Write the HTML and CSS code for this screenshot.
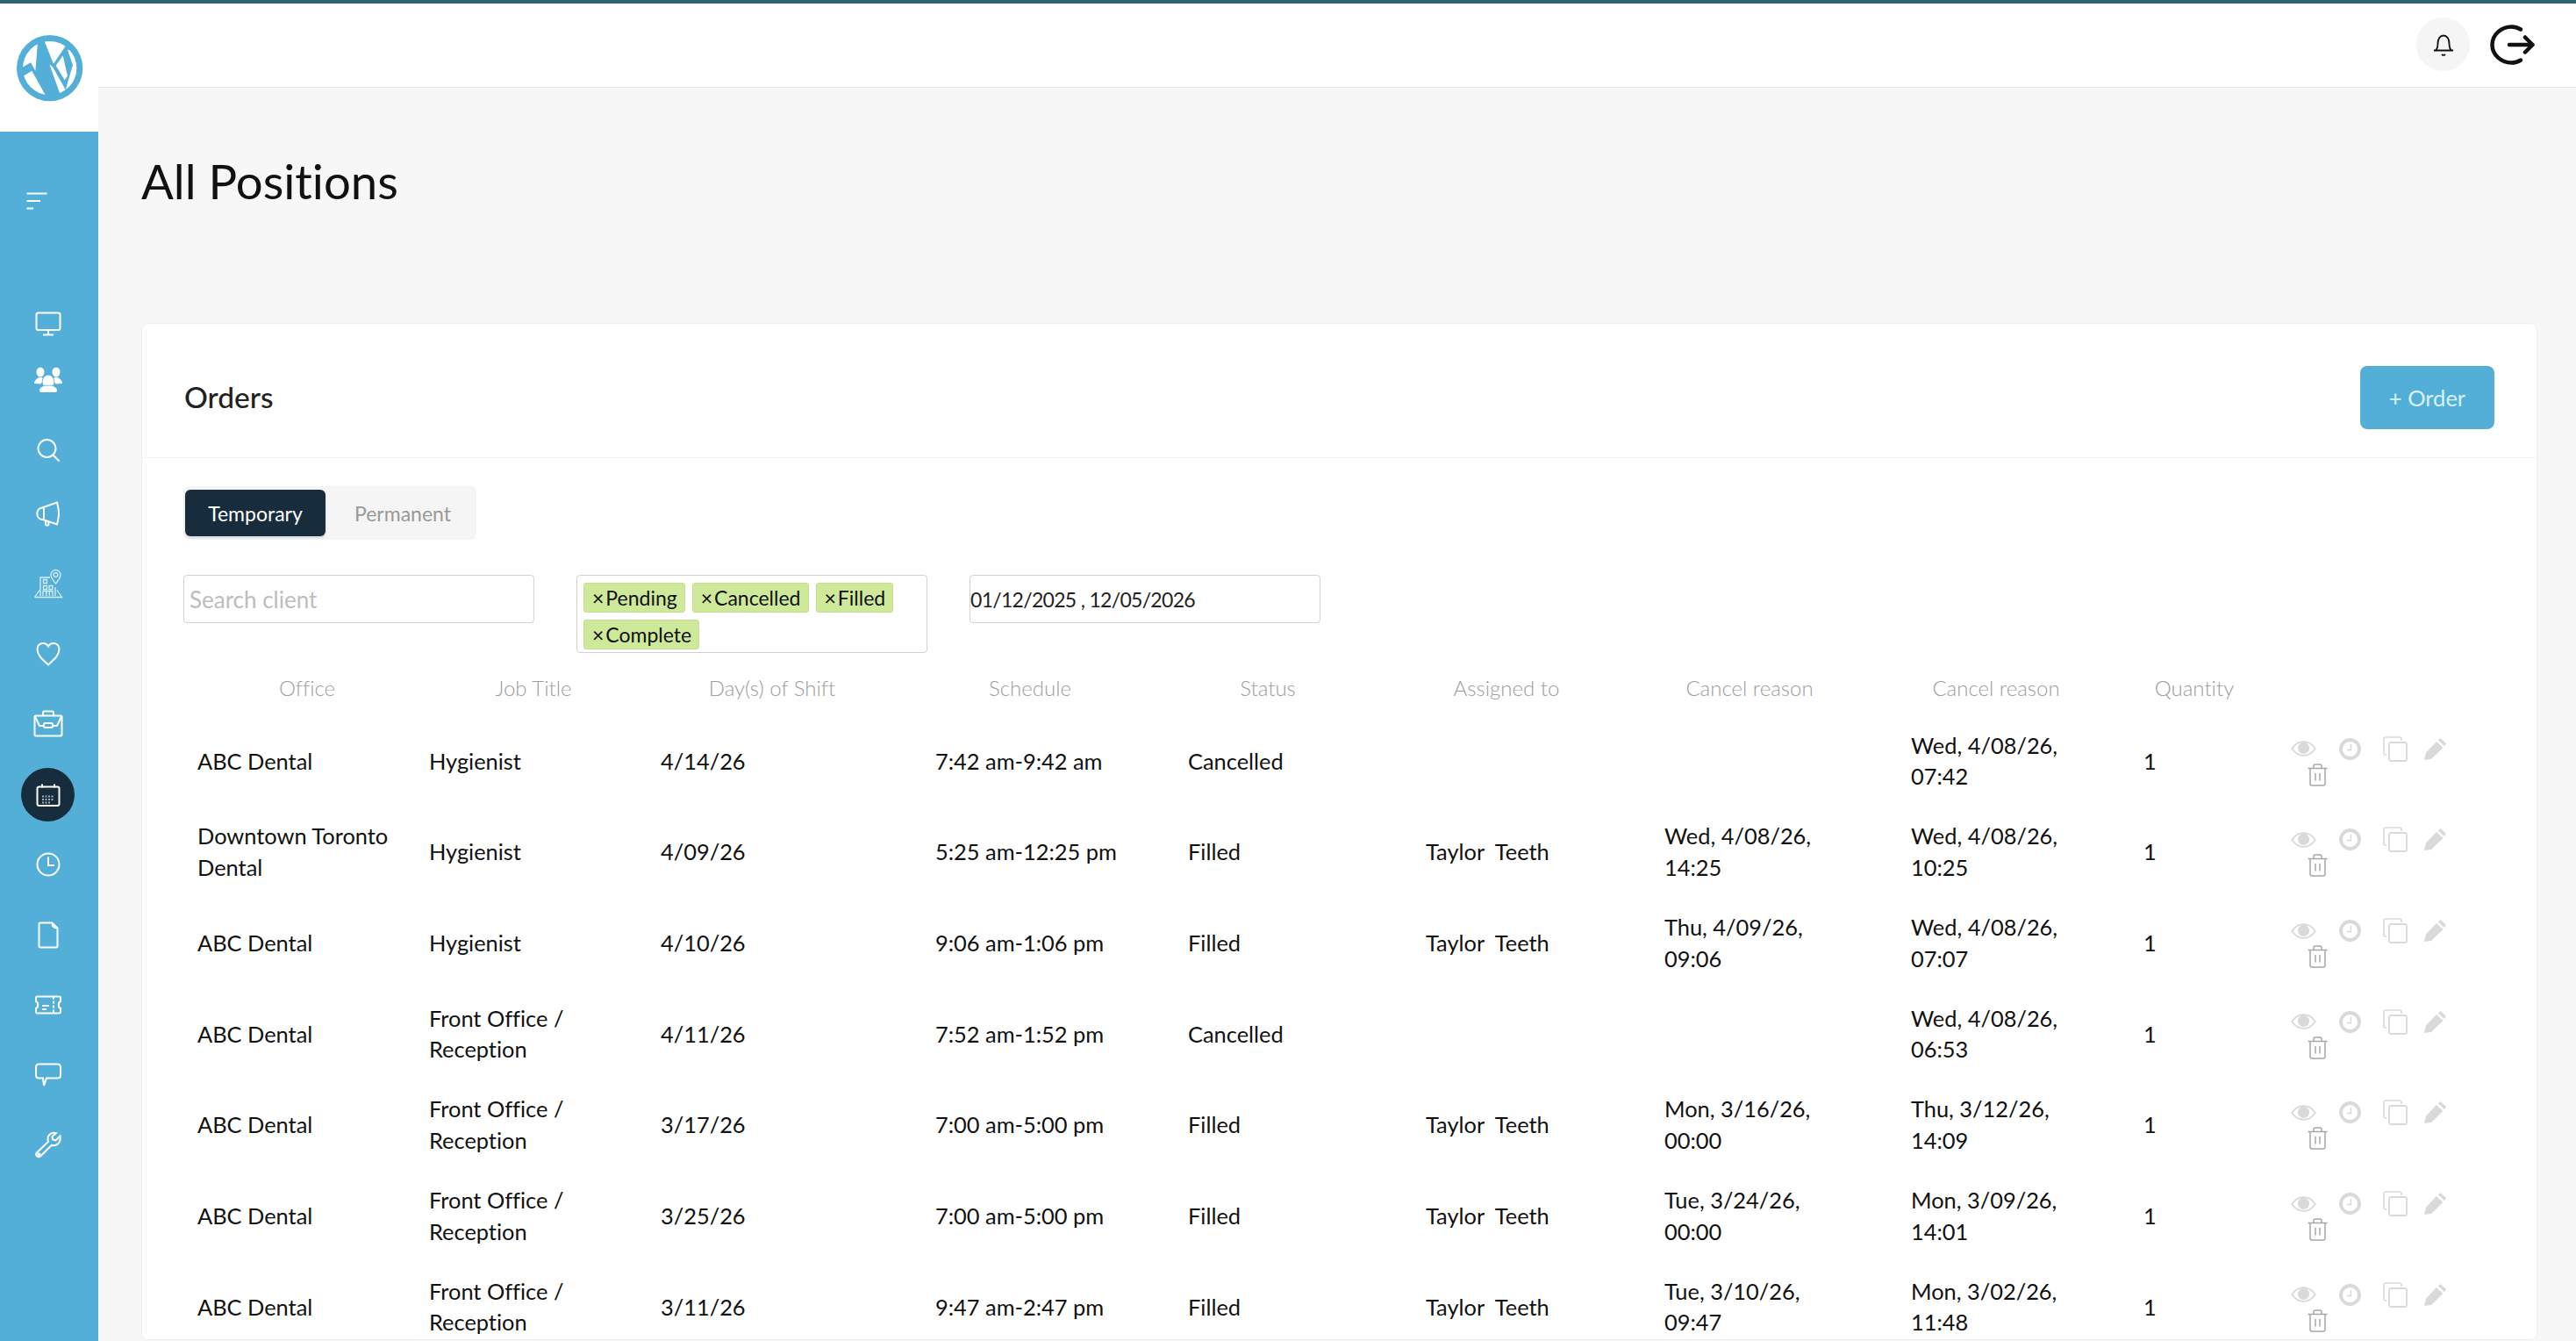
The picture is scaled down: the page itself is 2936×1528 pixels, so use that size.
FILE: index.html
```html
<!DOCTYPE html>
<html lang="en">
<head>
  <meta charset="utf-8" />
  <title>All Positions</title>
  <link rel="stylesheet" href="styles.css">
</head>
<body>
  <svg class="sprites" width="0" height="0">
    <symbol id="i-eye" viewBox="0 0 29 18">
      <path d="M1.2 9C5 3.6 9.5 1.2 14.5 1.2S24 3.6 27.8 9C24 14.4 19.500 16.800 14.500 16.800S5 14.400 1.200 9Z" fill="none" stroke="currentColor" stroke-width="1.800"/>
      <circle cx="14.500" cy="8.300" r="6.600" fill="currentColor"/>
    </symbol>
    <symbol id="i-clock" viewBox="0 0 25 25">
      <circle cx="12.500" cy="12.500" r="10.500" fill="none" stroke="currentColor" stroke-width="3.800"/>
      <path d="M13.500 7v6.500H9" fill="none" stroke="currentColor" stroke-width="1.500"/>
    </symbol>
    <symbol id="i-copy" viewBox="0 0 28 29">
      <path d="M4 21H3a2 2 0 0 1-2-2V3a2 2 0 0 1 2-2h16a2 2 0 0 1 2 2v2" fill="none" stroke="currentColor" stroke-width="1.600"/>
      <rect x="7" y="7" width="20" height="21" rx="2" fill="none" stroke="currentColor" stroke-width="1.800"/>
    </symbol>
    <symbol id="i-pencil" viewBox="0 0 25 25">
      <path d="M18.500 0 25 6 23 9 15.800 2.600Z M14 4 21.500 11 8 24 0 25 2 16.500Z" fill="currentColor"/>
    </symbol>
    <symbol id="i-trash" viewBox="0 0 23 26">
      <path d="M0.500 5.500H22.500M7 5.500V3a2 2 0 0 1 2-2h5a2 2 0 0 1 2 2v2.500M3 5.500V23a2 2 0 0 0 2 2h13a2 2 0 0 0 2-2V5.500M9 11v8.500M14 11v8.500" fill="none" stroke="currentColor" stroke-width="1.500"/>
    </symbol>
  </svg>

  <div class="app">
    <aside class="side">
      <div class="logo">
        <svg width="90" height="90" viewBox="0 0 270 270">
          <defs><clipPath id="logoClip"><circle cx="137" cy="137" r="92"/></clipPath></defs>
          <circle cx="137" cy="137" r="113" fill="#53afd7"/>
          <g clip-path="url(#logoClip)" fill="#fff">
            <polygon points="96,48 30,50 30,142 72,118 88,146"/>
            <polygon points="40,168 76,146 126,236 60,236"/>
            <polygon points="116,38 200,38 192,60 150,122"/>
            <polygon points="136,124 148,134 192,212 172,224"/>
            <polygon points="198,74 250,80 250,215 192,208 216,126"/>
            <polygon points="158,128 182,94 198,164 188,178"/>
          </g>
        </svg>
      </div>
      <div class="rail">
        <button class="toggle">
          <svg width="24" height="20" viewBox="0 0 24 20"><path d="M0.500 1.500H23.500M0.500 10H16M0.500 18.500H8" fill="none" stroke="#fff" stroke-width="2"/></svg>
        </button>
        <nav class="nav">
          <a class="nav-item short">
            <svg class="nav-icon" viewBox="0 0 40 40"><rect x="6.500" y="8.500" width="27" height="19.500" rx="2"/><path d="M20 28v5M14 33.500h12"/></svg>
          </a>
          <a class="nav-item">
            <svg class="nav-icon fill" viewBox="0 0 40 40">
              <ellipse cx="11" cy="11" rx="4.500" ry="5.500"/><ellipse cx="29" cy="11" rx="4.500" ry="5.500"/>
              <path d="M4 24c0-3.500 3-5.500 5.500-7h3l3 2-4 5.500Z M36 24c0-3.500-3-5.500-5.500-7h-3l-3 2 4 5.500Z"/>
              <ellipse class="cut" cx="20" cy="22" rx="6.500" ry="7.500"/>
              <path class="cut" d="M10 32c0-3 3-4.500 6-5.500h8c3 1 6 2.500 6 5.500 0 1.200-.8 2-2 2H12c-1.200 0-2-.8-2-2Z"/>
            </svg>
          </a>
          <a class="nav-item tight">
            <svg class="nav-icon" viewBox="0 0 40 40"><circle cx="18.500" cy="18" r="10"/><path d="M25.500 25.500 32.500 32.500"/></svg>
          </a>
          <a class="nav-item">
            <svg class="nav-icon" viewBox="0 0 40 40"><path d="M13 13.500 30 7.500c1 4 2 8 2 12.500s-1 8.500-2 12.500L14 27H13a6.500 6.800 0 0 1 0-13.500Z M17 28v4.500c0 1.500 3 1.800 3.500 0L20 29M15 14v13"/></svg>
          </a>
          <a class="nav-item">
            <svg class="nav-icon thin" viewBox="0 0 40 40"><path d="M11 34V13h11M28 24v10M4.500 35.500l5.500-8M4.500 35.500h31l-5.500-8M14.500 15.500h4v4h-4ZM14.500 22.500h4v4h-4ZM21 22.500h4v4h-4ZM14 34v-5.500h11V34M17.800 28.500V34M21.300 28.500V34"/><path d="M28.500 20c-3-4-5.500-6.500-5.500-10a5.500 5.500 0 0 1 11 0c0 3.500-2.500 6-5.500 10Z"/><circle cx="28.500" cy="10" r="2.400"/></svg>
          </a>
          <a class="nav-item">
            <svg class="nav-icon" viewBox="0 0 40 40"><path d="M20 32.500C14 27 7.500 22 7.500 14.500 7.500 10.500 10.500 8 14 8c2.500 0 4.800 1.300 6 3.500C21.200 9.300 23.500 8 26 8c3.500 0 6.500 2.500 6.500 6.500C32.500 22 26 27 20 32.500Z"/></svg>
          </a>
          <a class="nav-item">
            <svg class="nav-icon" viewBox="0 0 40 40"><rect x="4.500" y="10.500" width="31" height="23" rx="1.500"/><path d="M14 10.500V7a1.500 1.500 0 0 1 1.500-1.500h9A1.500 1.500 0 0 1 26 7v3.500M4.500 10.500 10 22h5M35.500 10.500 30 22h-5"/><rect x="15" y="19" width="10" height="5" rx="1.500"/></svg>
          </a>
          <a class="nav-item active">
            <svg class="nav-icon" viewBox="0 0 40 40"><rect x="7.500" y="11.500" width="25" height="21.500" rx="2"/><path d="M13 8.500v4M27 8.500v4"/><path class="dots" d="M13 22.500h14M13 26h14M13 29.500h10"/></svg>
          </a>
          <a class="nav-item">
            <svg class="nav-icon" viewBox="0 0 40 40"><circle cx="20" cy="20" r="12.500"/><path d="M20 11.500V21h7"/></svg>
          </a>
          <a class="nav-item">
            <svg class="nav-icon" viewBox="0 0 40 40"><path d="M24.500 6.500H11a1.500 1.500 0 0 0-1.500 1.500v25a1.500 1.500 0 0 0 1.500 1.500h18a1.500 1.500 0 0 0 1.500-1.500V12.500Z M24.500 6.500c0 4 1 6 6 6"/></svg>
          </a>
          <a class="nav-item">
            <svg class="nav-icon" viewBox="0 0 40 40"><path d="M7.500 10.500h25a1.500 1.500 0 0 1 1.500 1.500v4c-3 1-3 7 0 8v4a1.500 1.500 0 0 1-1.500 1.500h-25A1.500 1.500 0 0 1 6 28v-4c3-1 3-7 0-8v-4a1.500 1.500 0 0 1 1.500-1.500Z M26 10.500v3M26 15.500v3M26 20.500v3M26 25.500v3M13 21h8M13 25h5"/></svg>
          </a>
          <a class="nav-item">
            <svg class="nav-icon" viewBox="0 0 40 40"><path d="M9.500 7.500h21c2 0 3.500 1.500 3.500 3.500v9c0 2-1.500 3.500-3.500 3.500H18L15 32l-1-8.500H9.500C7.500 23.500 6 22 6 20v-9c0-2 1.500-3.500 3.500-3.500Z"/></svg>
          </a>
          <a class="nav-item">
            <svg class="nav-icon" viewBox="0 0 40 40"><path d="M33.500 9.500 28.500 14.500 25 13.500 24.500 10 29 6.200c-4-1.500-9 .8-9.500 6 0 1.500.2 2.500.6 3.500L7 28.500c-2.500 2.500 1.500 6.500 4 4L24 19.700c5 1.800 11-2.500 9.500-10.200Z"/><circle cx="9.500" cy="30.500" r="1"/></svg>
          </a>
        </nav>
      </div>
    </aside>

    <main class="main">
      <header class="topbar">
        <button class="bell">
          <svg width="26" height="30" viewBox="0 0 26 30"><path d="M2 21.500h22M4 21.500c2-2 2.500-4 2.500-8 0-5 2.500-9 6.500-9s6.500 4 6.500 9c0 4 .5 6 2.500 8M11 26c1 1 3 1 4 0" fill="none" stroke="#111" stroke-width="1.800"/></svg>
        </button>
        <button class="logout">
          <svg width="51" height="46" viewBox="0 0 51 46"><path d="M35 5.500C31 3 28 2.500 24.500 2.500 13 2.500 2.500 11.500 2.500 23s10.500 20.500 22 20.500c3.500 0 6.500-.5 10.500-3" fill="none" stroke="#111" stroke-width="4.500" stroke-linecap="round"/><path d="M22 23H48.500M40 14.500 48.500 23 40 31.500" fill="none" stroke="#111" stroke-width="4.500" stroke-linecap="round" stroke-linejoin="round"/></svg>
        </button>
      </header>

      <div class="content">
        <h1 class="page-title">All Positions</h1>

        <section class="card">
          <div class="card-head">
            <h2>Orders</h2>
            <button class="add-btn">+ Order</button>
          </div>
          <div class="card-body">
            <div class="tabs">
              <div class="tab active">Temporary</div>
              <div class="tab wide">Permanent</div>
            </div>

            <div class="filters">
              <input class="field" type="text" placeholder="Search client" />
              <div class="multi">
                <span class="tag"><b>×</b>Pending</span>
                <span class="tag"><b>×</b>Cancelled</span>
                <span class="tag"><b>×</b>Filled</span>
                <span class="tag"><b>×</b>Complete</span>
              </div>
              <input class="field date" type="text" value="01/12/2025 , 12/05/2026" />
            </div>

            <div class="thead">
              <div>Office</div>
              <div>Job Title</div>
              <div>Day(s) of Shift</div>
              <div>Schedule</div>
              <div>Status</div>
              <div>Assigned to</div>
              <div>Cancel reason</div>
              <div>Cancel reason</div>
              <div>Quantity</div>
            </div>

            <div class="row">
              <div>ABC Dental</div>
              <div>Hygienist</div>
              <div>4/14/26</div>
              <div>7:42 am-9:42 am</div>
              <div>Cancelled</div>
              <div></div>
              <div></div>
              <div>Wed, 4/08/26,<br>07:42</div>
              <div>1</div>
              <div class="actions">
                <svg class="a-eye"><use href="#i-eye"/></svg>
                <svg class="a-clock"><use href="#i-clock"/></svg>
                <svg class="a-copy"><use href="#i-copy"/></svg>
                <svg class="a-pencil"><use href="#i-pencil"/></svg>
                <svg class="a-trash"><use href="#i-trash"/></svg>
              </div>
            </div>

            <div class="row">
              <div>Downtown Toronto<br>Dental</div>
              <div>Hygienist</div>
              <div>4/09/26</div>
              <div>5:25 am-12:25 pm</div>
              <div>Filled</div>
              <div>Taylor&nbsp; Teeth</div>
              <div>Wed, 4/08/26,<br>14:25</div>
              <div>Wed, 4/08/26,<br>10:25</div>
              <div>1</div>
              <div class="actions">
                <svg class="a-eye"><use href="#i-eye"/></svg>
                <svg class="a-clock"><use href="#i-clock"/></svg>
                <svg class="a-copy"><use href="#i-copy"/></svg>
                <svg class="a-pencil"><use href="#i-pencil"/></svg>
                <svg class="a-trash"><use href="#i-trash"/></svg>
              </div>
            </div>

            <div class="row">
              <div>ABC Dental</div>
              <div>Hygienist</div>
              <div>4/10/26</div>
              <div>9:06 am-1:06 pm</div>
              <div>Filled</div>
              <div>Taylor&nbsp; Teeth</div>
              <div>Thu, 4/09/26,<br>09:06</div>
              <div>Wed, 4/08/26,<br>07:07</div>
              <div>1</div>
              <div class="actions">
                <svg class="a-eye"><use href="#i-eye"/></svg>
                <svg class="a-clock"><use href="#i-clock"/></svg>
                <svg class="a-copy"><use href="#i-copy"/></svg>
                <svg class="a-pencil"><use href="#i-pencil"/></svg>
                <svg class="a-trash"><use href="#i-trash"/></svg>
              </div>
            </div>

            <div class="row">
              <div>ABC Dental</div>
              <div>Front Office /<br>Reception</div>
              <div>4/11/26</div>
              <div>7:52 am-1:52 pm</div>
              <div>Cancelled</div>
              <div></div>
              <div></div>
              <div>Wed, 4/08/26,<br>06:53</div>
              <div>1</div>
              <div class="actions">
                <svg class="a-eye"><use href="#i-eye"/></svg>
                <svg class="a-clock"><use href="#i-clock"/></svg>
                <svg class="a-copy"><use href="#i-copy"/></svg>
                <svg class="a-pencil"><use href="#i-pencil"/></svg>
                <svg class="a-trash"><use href="#i-trash"/></svg>
              </div>
            </div>

            <div class="row">
              <div>ABC Dental</div>
              <div>Front Office /<br>Reception</div>
              <div>3/17/26</div>
              <div>7:00 am-5:00 pm</div>
              <div>Filled</div>
              <div>Taylor&nbsp; Teeth</div>
              <div>Mon, 3/16/26,<br>00:00</div>
              <div>Thu, 3/12/26,<br>14:09</div>
              <div>1</div>
              <div class="actions">
                <svg class="a-eye"><use href="#i-eye"/></svg>
                <svg class="a-clock"><use href="#i-clock"/></svg>
                <svg class="a-copy"><use href="#i-copy"/></svg>
                <svg class="a-pencil"><use href="#i-pencil"/></svg>
                <svg class="a-trash"><use href="#i-trash"/></svg>
              </div>
            </div>

            <div class="row">
              <div>ABC Dental</div>
              <div>Front Office /<br>Reception</div>
              <div>3/25/26</div>
              <div>7:00 am-5:00 pm</div>
              <div>Filled</div>
              <div>Taylor&nbsp; Teeth</div>
              <div>Tue, 3/24/26,<br>00:00</div>
              <div>Mon, 3/09/26,<br>14:01</div>
              <div>1</div>
              <div class="actions">
                <svg class="a-eye"><use href="#i-eye"/></svg>
                <svg class="a-clock"><use href="#i-clock"/></svg>
                <svg class="a-copy"><use href="#i-copy"/></svg>
                <svg class="a-pencil"><use href="#i-pencil"/></svg>
                <svg class="a-trash"><use href="#i-trash"/></svg>
              </div>
            </div>

            <div class="row">
              <div>ABC Dental</div>
              <div>Front Office /<br>Reception</div>
              <div>3/11/26</div>
              <div>9:47 am-2:47 pm</div>
              <div>Filled</div>
              <div>Taylor&nbsp; Teeth</div>
              <div>Tue, 3/10/26,<br>09:47</div>
              <div>Mon, 3/02/26,<br>11:48</div>
              <div>1</div>
              <div class="actions">
                <svg class="a-eye"><use href="#i-eye"/></svg>
                <svg class="a-clock"><use href="#i-clock"/></svg>
                <svg class="a-copy"><use href="#i-copy"/></svg>
                <svg class="a-pencil"><use href="#i-pencil"/></svg>
                <svg class="a-trash"><use href="#i-trash"/></svg>
              </div>
            </div>
          </div>
        </section>
      </div>
    </main>
  </div>
</body>
</html>
```

FILE: styles.css
```css
:root { --blue:#53afd7; --navy:#172d3d; --bg:#f7f7f7; --line:#e6e6e6; --muted:#9c9c9c; }
* { box-sizing: border-box; }
html, body { height: 100%; }
body { margin: 0; height: 1528px; overflow: hidden; border-top: 4px solid #2f6470; background: var(--bg); font-family: Lato, "Open Sans", sans-serif; font-variant-ligatures: none; color: #111; }
button { border: 0; padding: 0; background: none; font: inherit; }
.sprites { position: absolute; }
.app { display: flex; height: 1524px; }

/* sidebar */
.side { width: 112px; flex: none; display: flex; flex-direction: column; }
.logo { height: 146px; background: #fff; display: flex; justify-content: center; align-items: flex-start; padding-top: 28px; padding-right: 1px; }
.rail { flex: 1; background: var(--blue); }
.toggle { display: flex; align-items: center; height: 158px; padding-left: 30px; }
.nav { display: flex; flex-direction: column; width: 109px; padding-top: 20px; }
.nav-item { height: 80px; flex: none; display: flex; align-items: center; justify-content: center; }
.nav-item.short { margin-bottom: -15px; }
.nav-item.tight { margin-bottom: -8px; }
.nav-icon { width: 40px; height: 40px; fill: none; stroke: #fff; stroke-width: 2; }
.nav-icon.thin { stroke-width: 1.300; stroke: #d8eef8; }
.nav-icon.fill { fill: #fff; stroke: none; }
.nav-icon .cut { stroke: var(--blue); stroke-width: 1.500; paint-order: stroke; }
.nav-item.active { position: relative; }
.nav-item.active::before { content: ""; position: absolute; width: 61px; height: 61px; border-radius: 50%; background: var(--navy); }
.nav-item.active .nav-icon { position: relative; }
.dots { stroke-width: 2; stroke-dasharray: 2 1.500; stroke: #9fb0bc; }

/* top bar */
.main { flex: 1; min-width: 0; display: flex; flex-direction: column; }
.topbar { height: 96px; flex: none; background: #fff; border-bottom: 1px solid var(--line); display: flex; justify-content: flex-end; align-items: center; gap: 23px; padding: 0 47px 2px 0; }
.bell { width: 61px; height: 61px; border-radius: 50%; background: #f5f5f5; display: flex; align-items: center; justify-content: center; }
.logout { width: 51px; height: 46px; display: flex; }

.content { flex: 1; padding: 0 44px 0 49px; min-height: 0; }
.page-title { margin: 0; height: 268px; padding: 78px 0 0 0; font-size: 54.500px; line-height: 56px; font-weight: 400; color: #111; }

/* card */
.card { height: 1159px; background: #fff; border: 1px solid #eeeeee; border-radius: 8px; overflow: hidden; }
.card-head { height: 153px; padding: 16px 48px 0 48px; border-bottom: 1px solid #f2f2f2; display: flex; justify-content: space-between; align-items: center; }
.card-head h2 { margin: -2px 0 0; font-size: 33.500px; font-weight: 500; color: #222; }
.add-btn { width: 153px; height: 72px; border-radius: 8px; background: var(--blue); color: #d8f3fc; font-size: 25.500px; font-weight: 400; }

.card-body { padding: 32px 0 0 47px; }
.tabs { display: inline-flex; background: #f5f5f5; border-radius: 6px; padding: 4px 2px; height: 61px; vertical-align: top; }
.tab { width: 160px; display: flex; align-items: center; justify-content: center; font-size: 23px; color: #999; border-radius: 6px; }
.tab.wide { width: 170px; padding-left: 6px; }
.tab.active { background: var(--navy); color: #fff; box-shadow: 0 2px 3px rgba(0,0,0,0.12); }

.filters { display: flex; align-items: flex-start; gap: 48px; margin-top: 40px; }
.field { width: 400px; height: 55px; border: 1px solid #d2d2d2; border-radius: 4px; padding: 0 6px; font: 400 26px Lato, sans-serif; font-variant-ligatures: none; color: #222; background: #fff; outline: 0; }
.field::placeholder { color: #bdbdbd; opacity: 1; }
.field.date { padding: 0; font-size: 23px; letter-spacing: -0.700px; }
.multi { width: 400px; height: 89px; border: 1px solid #d2d2d2; border-radius: 4px; padding: 8px 7px; display: flex; flex-wrap: wrap; align-content: flex-start; gap: 8px; }
.tag { height: 34px; display: inline-flex; align-items: center; padding: 0 8px 0 9px; font-size: 23px; color: #111; background: #cfe99a; border: 1px solid #c4de90; border-radius: 3px; }
.tag b { font-weight: 400; margin-right: 2px; }

/* orders list */
.thead { display: grid; grid-template-columns: 282px 234px 310px 278px 264px 280px 274px 288px 164px; height: 64px; margin-top: 7px; align-items: center; text-align: center; font-size: 24px; font-weight: 300; color: var(--muted); }
.row { display: grid; grid-template-columns: 264px 264px 313px 288px 271px 272px 281px 265px 168px 1fr; height: 103.670px; padding: 1px 0 0 16px; align-items: center; font-size: 25.400px; line-height: 35.500px; color: #111; }
.actions { display: flex; flex-wrap: wrap; align-items: center; width: 200px; color: #d9d9d9; }
.actions svg { flex: none; }
.a-eye { width: 29px; height: 18px; margin-right: 26px; }
.a-clock { width: 25px; height: 25px; margin-right: 25px; }
.a-copy { width: 28px; height: 29px; margin-right: 19px; }
.a-pencil { width: 25px; height: 25px; margin-right: 10px; }
.a-trash { width: 23px; height: 26px; margin: 2px 0 0 19px; color: #a8a8a8; }
```
